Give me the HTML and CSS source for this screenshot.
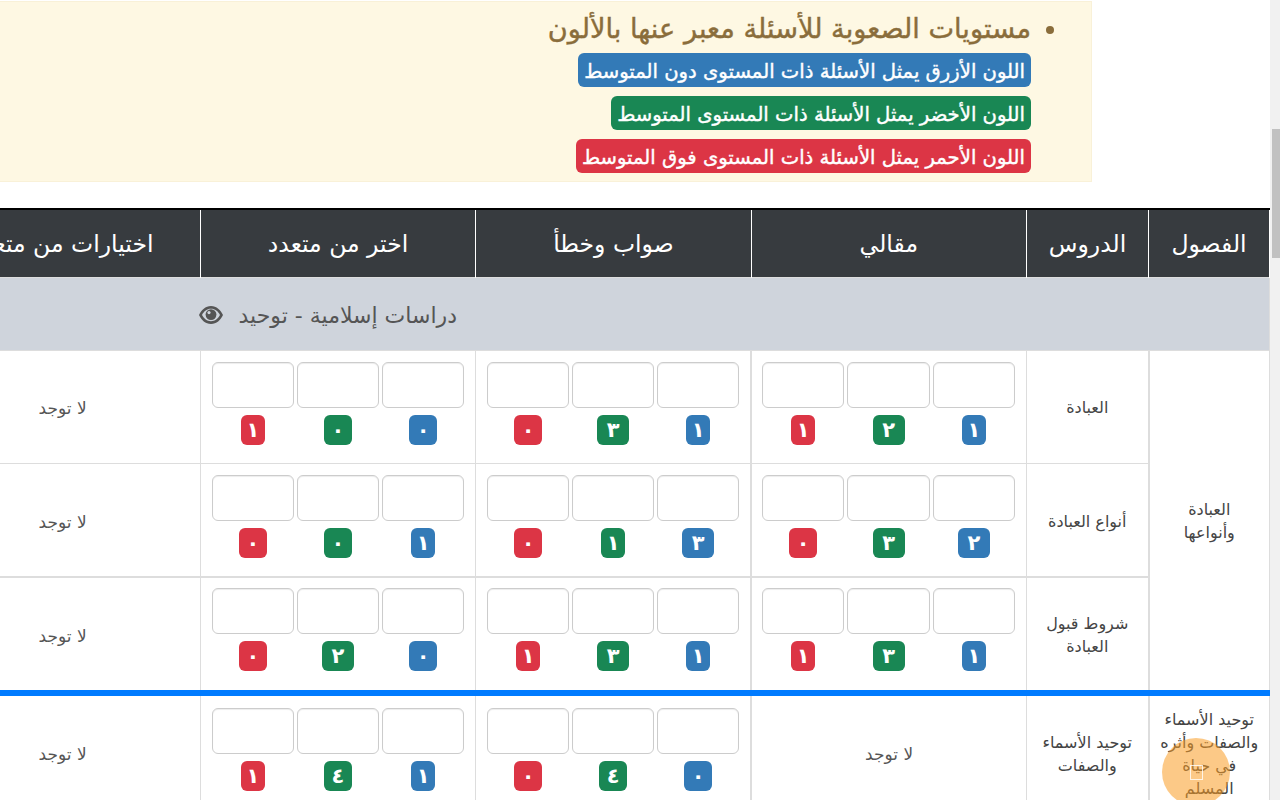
FILE: index.html
```html
<!doctype html>
<html lang="ar" dir="rtl">
  <head>
    <meta charset="UTF-8" />
    <meta name="viewport" content="width=device-width, initial-scale=1.0" />
    <title>توزيع الأسئلة</title>
    <link rel="stylesheet" href="styles.css">
  </head>
  <body>
    <div class="scrollbar"><div class="thumb"></div></div>
    <main class="page">
      <div class="alert">
        <ul>
          <li>
            مستويات الصعوبة للأسئلة معبر عنها بالألون
            <div class="legend"><span class="tag blue">اللون الأزرق يمثل الأسئلة ذات المستوى دون المتوسط</span></div>
            <div class="legend"><span class="tag green">اللون الأخضر يمثل الأسئلة ذات المستوى المتوسط</span></div>
            <div class="legend"><span class="tag red">اللون الأحمر يمثل الأسئلة ذات المستوى فوق المتوسط</span></div>
          </li>
        </ul>
      </div>

      <table>
        <colgroup>
          <col class="c-ch" /><col class="c-le" /><col class="c-q" /><col class="c-q" /><col class="c-q" /><col class="c-q" />
        </colgroup>
        <thead>
          <tr>
            <th>الفصول</th>
            <th>الدروس</th>
            <th>مقالي</th>
            <th>صواب وخطأ</th>
            <th>اختر من متعدد</th>
            <th>اختيارات من متعدد</th>
          </tr>
        </thead>
        <tbody>
          <tr class="subject">
            <td colspan="6">
              <span>دراسات إسلامية - توحيد</span>
              <svg class="eye" viewBox="0 0 24 18" width="24" height="18">
                <path fill-rule="evenodd" fill="#555" d="M12 0C6.500 0 2.300 4 0 9c2.300 5 6.500 9 12 9s9.700-4 12-9c-2.300-5-6.500-9-12-9zM3 9c1.900-3.700 5-6.200 9-6.200s7.100 2.500 9 6.200c-1.900 3.700-5 6.200-9 6.200S4.900 12.700 3 9z"/>
                <circle cx="12" cy="8.600" r="5.400" fill="#555"/>
                <circle cx="10" cy="6.600" r="1.600" fill="#cfd4dc"/>
              </svg>
            </td>
          </tr>
          <tr>
            <td rowspan="3" class="name">العبادة<br />وأنواعها</td>
            <td class="name">العبادة</td>
            <td>
              <div class="qs">
                <div class="q"><input type="text" /><span class="num blue narrow">١</span></div>
                <div class="q"><input type="text" /><span class="num green wide">٢</span></div>
                <div class="q"><input type="text" /><span class="num red narrow">١</span></div>
              </div>
            </td>
            <td>
              <div class="qs">
                <div class="q"><input type="text" /><span class="num blue narrow">١</span></div>
                <div class="q"><input type="text" /><span class="num green wide">٣</span></div>
                <div class="q"><input type="text" /><span class="num red">٠</span></div>
              </div>
            </td>
            <td>
              <div class="qs">
                <div class="q"><input type="text" /><span class="num blue">٠</span></div>
                <div class="q"><input type="text" /><span class="num green">٠</span></div>
                <div class="q"><input type="text" /><span class="num red narrow">١</span></div>
              </div>
            </td>
            <td class="none">لا توجد</td>
          </tr>
          <tr>
            <td class="name">أنواع العبادة</td>
            <td>
              <div class="qs">
                <div class="q"><input type="text" /><span class="num blue wide">٢</span></div>
                <div class="q"><input type="text" /><span class="num green wide">٣</span></div>
                <div class="q"><input type="text" /><span class="num red">٠</span></div>
              </div>
            </td>
            <td>
              <div class="qs">
                <div class="q"><input type="text" /><span class="num blue wide">٣</span></div>
                <div class="q"><input type="text" /><span class="num green narrow">١</span></div>
                <div class="q"><input type="text" /><span class="num red">٠</span></div>
              </div>
            </td>
            <td>
              <div class="qs">
                <div class="q"><input type="text" /><span class="num blue narrow">١</span></div>
                <div class="q"><input type="text" /><span class="num green">٠</span></div>
                <div class="q"><input type="text" /><span class="num red">٠</span></div>
              </div>
            </td>
            <td class="none">لا توجد</td>
          </tr>
          <tr class="heavy">
            <td class="name">شروط قبول العبادة</td>
            <td>
              <div class="qs">
                <div class="q"><input type="text" /><span class="num blue narrow">١</span></div>
                <div class="q"><input type="text" /><span class="num green wide">٣</span></div>
                <div class="q"><input type="text" /><span class="num red narrow">١</span></div>
              </div>
            </td>
            <td>
              <div class="qs">
                <div class="q"><input type="text" /><span class="num blue narrow">١</span></div>
                <div class="q"><input type="text" /><span class="num green wide">٣</span></div>
                <div class="q"><input type="text" /><span class="num red narrow">١</span></div>
              </div>
            </td>
            <td>
              <div class="qs">
                <div class="q"><input type="text" /><span class="num blue">٠</span></div>
                <div class="q"><input type="text" /><span class="num green wide">٢</span></div>
                <div class="q"><input type="text" /><span class="num red">٠</span></div>
              </div>
            </td>
            <td class="none">لا توجد</td>
          </tr>
          <tr class="next">
            <td class="name chapter">توحيد الأسماء<br />والصفات وأثره<br />في حياة<br />المسلم</td>
            <td class="name">توحيد الأسماء والصفات</td>
            <td class="none">لا توجد</td>
            <td>
              <div class="qs">
                <div class="q"><input type="text" /><span class="num blue">٠</span></div>
                <div class="q"><input type="text" /><span class="num green">٤</span></div>
                <div class="q"><input type="text" /><span class="num red">٠</span></div>
              </div>
            </td>
            <td>
              <div class="qs">
                <div class="q"><input type="text" /><span class="num blue narrow">١</span></div>
                <div class="q"><input type="text" /><span class="num green">٤</span></div>
                <div class="q"><input type="text" /><span class="num red narrow">١</span></div>
              </div>
            </td>
            <td class="none">لا توجد</td>
          </tr>
        </tbody>
      </table>
    </main>
    <div class="fab"><span class="tofu"></span></div>
  </body>
</html>
```

FILE: styles.css
```css
* {
  box-sizing: border-box;
}

html,
body {
  height: 100%;
}

body {
  margin: 0;
  display: flex;
  overflow: hidden;
  font-family: "DejaVu Sans", sans-serif;
  color: #444;
  background: #fff;
}

.scrollbar {
  flex: 0 0 10px;
  height: 100%;
  padding: 129px 0 0 2px;
  background: #f1f1f1;
}

.thumb {
  height: 129px;
  background: #c1c1c1;
}

.page {
  flex: 0 0 1270px;
  width: 1270px;
  height: 800px;
  overflow: hidden;
  padding-top: 1px;
}

.alert {
  width: 1200px;
  height: 181px;
  margin-right: 178px;
  padding: 11px 60px 0 0;
  background: #fef8e3;
  border: 1px solid #f9f1d8;
  color: #8a6d3b;
  font-size: 27.200px;
  -webkit-text-stroke: 0.4px #8a6d3b;
  line-height: 32px;
}

.alert ul {
  margin: 0;
  padding: 0;
}

.legend {
  display: flex;
  align-items: flex-start;
  margin-top: 8px;
  height: 35px;
}

.tag {
  height: 34px;
  padding: 0 6px;
  border-radius: 6px;
  color: #fff;
  font-size: 19.600px;
  -webkit-text-stroke: 0.4px #fff;
  line-height: 37px;
}

.blue {
  background: #337ab7;
}

.green {
  background: #198754;
}

.red {
  background: #dc3545;
}

table {
  width: 1344.600px;
  margin-top: 26px;
  table-layout: fixed;
  border-collapse: collapse;
}

.c-ch {
  width: 121px;
}

.c-le {
  width: 122px;
}

.c-q {
  width: 275.400px;
}

th {
  height: 68px;
  padding: 2px 0 0;
  background: #373b3f;
  border-top: 2px solid #000;
  border-left: 1px solid #fff;
  border-right: 1px solid #fff;
  color: #fff;
  font-size: 23.500px;
  font-weight: normal;
}

td {
  padding: 11px 11px 18.350px;
  border: 1px solid #ddd;
  text-align: center;
  vertical-align: middle;
}

td:nth-last-child(4) {
  padding-left: 10px;
  border-left: 2px solid #ddd;
}

td[rowspan],
.next td:first-child {
  border-left: 2px solid #ddd;
}

.heavy td {
  padding-top: 10px;
  padding-bottom: 19px;
  border-top: 2px solid #ddd;
}

.subject td {
  height: 73px;
  padding: 3px 812px 0 0;
  background: #cfd4dc;
  border-left: 1px solid #ddd;
  text-align: right;
  font-size: 22px;
  color: #555;
}

.eye {
  margin-right: 9px;
  vertical-align: -1px;
}

.name,
.heavy .name {
  padding: 13px 11px 11px;
  font-size: 16px;
  line-height: 23px;
}

.none,
.heavy .none {
  padding: 14px 11px 11px;
  font-size: 17px;
  color: #555;
}

.qs {
  display: grid;
  grid-template-columns: repeat(3, 1fr);
  column-gap: 3px;
}

.q {
  display: flex;
  flex-direction: column;
  align-items: center;
  gap: 7px;
}

.q input {
  width: 100%;
  height: 46px;
  padding: 0;
  background: #fff;
  border: 1px solid #ccc;
  border-radius: 6px;
  box-shadow: inset 0 1px 1px rgba(0, 0, 0, 0.075);
}

.num {
  width: 28px;
  height: 30px;
  border-radius: 6px;
  color: #fff;
  font-size: 21px;
  font-weight: bold;
  line-height: 30px;
}

.num.narrow {
  width: 24px;
}

.num.wide {
  width: 32px;
}

.next td {
  padding-top: 12px;
  border-top: 6px solid #007bff;
  vertical-align: top;
}

.next .name,
.next .none {
  padding: 12px 4px;
  vertical-align: middle;
}

.fab {
  position: fixed;
  left: 1162px;
  top: 738px;
  display: flex;
  align-items: center;
  justify-content: center;
  width: 68px;
  height: 68px;
  border-radius: 50%;
  background: rgba(249, 157, 37, 0.55);
}

.tofu {
  width: 13px;
  height: 15px;
  border: 1px solid rgba(255, 255, 255, 0.8);
}
```
